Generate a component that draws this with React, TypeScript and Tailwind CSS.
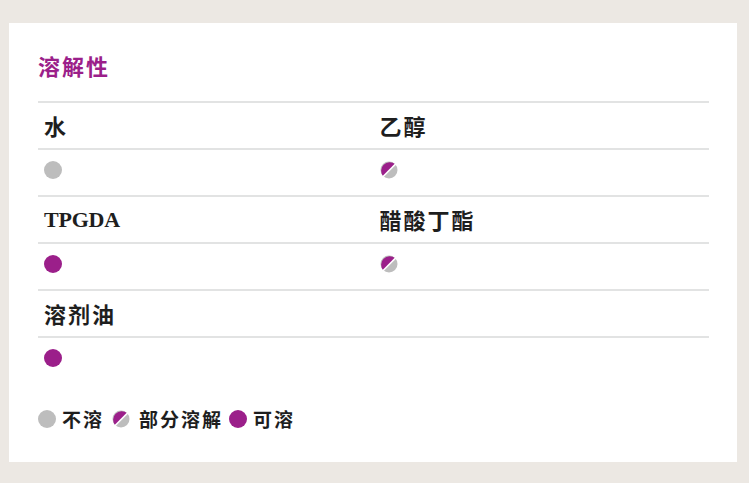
const PURPLE = '#9b1f8a'
const GRAY = '#bdbdbd'

type Level = 'none' | 'partial' | 'full'

function Dot({ level, size = 18 }: { level: Level; size?: number }) {
  if (level === 'partial') {
    return (
      <svg width={size} height={size} viewBox="0 0 18 18" className="block shrink-0">
        <circle cx="9" cy="9" r="8.5" fill={GRAY} />
        <path d="M3.3 15.3 A8.5 8.5 0 0 1 15.3 3.3 Z" fill={PURPLE} />
        <line x1="2.9" y1="15.7" x2="15.7" y2="2.9" stroke="#fff" strokeWidth="1.5" />
      </svg>
    )
  }
  return (
    <span
      className={`block shrink-0 rounded-full ${level === 'full' ? 'bg-[#9b1f8a]' : 'bg-[#bdbdbd]'}`}
      style={{ width: size, height: size }}
    />
  )
}

type Solvent = { name: string; level: Level; latin?: boolean }

const rows: Solvent[][] = [
  [
    { name: '水', level: 'none' },
    { name: '乙醇', level: 'partial' },
  ],
  [
    { name: 'TPGDA', level: 'full', latin: true },
    { name: '醋酸丁酯', level: 'partial' },
  ],
  [{ name: '溶剂油', level: 'full' }],
]

export default function App() {
  return (
    <main
      className="w-[749px] h-[483px] bg-[#ece8e3] pt-[23px] pl-[9px] pr-[12px]"
      style={{ fontFamily: '"Noto Sans CJK SC", "Noto Sans", sans-serif' }}
    >
      <div className="bg-white h-[439px] pt-[31px] pl-[29px] pr-[28px]">
        <h2 className="text-[22px] leading-none font-bold tracking-[2px] text-[#9b1f8a]">溶解性</h2>

        <div className="mt-[25px]">
          {rows.map((pair, i) => (
            <div key={i}>
              <div className="grid grid-cols-2 h-[47px] border-t-2 border-[#e2e3e3]">
                {pair.map((s) => (
                  <div key={s.name} className="flex items-center pl-[6px]">
                    {s.latin ? (
                      <span
                        className="text-[22px] font-bold text-[#1e1e1e] tracking-[-0.2px]"
                        style={{ fontFamily: '"Liberation Serif", serif' }}
                      >
                        {s.name}
                      </span>
                    ) : (
                      <span className="text-[22px] font-bold text-[#1e1e1e] tracking-[2px]">{s.name}</span>
                    )}
                  </div>
                ))}
              </div>
              <div className="grid grid-cols-2 h-[47px] border-t-2 border-[#e2e3e3]">
                {pair.map((s) => (
                  <div key={s.name} className="flex items-center pl-[6px] pb-[6px]">
                    <Dot level={s.level} />
                  </div>
                ))}
              </div>
            </div>
          ))}
        </div>

        <div className="mt-[22px] flex items-center text-[19px] font-bold text-[#1e1e1e] tracking-[2px]">
          <Dot level="none" />
          <span className="ml-[6px] mr-[8px]">不溶</span>
          <Dot level="partial" />
          <span className="ml-[9px] mr-[6px]">部分溶解</span>
          <Dot level="full" />
          <span className="ml-[6px]">可溶</span>
        </div>
      </div>
    </main>
  )
}
